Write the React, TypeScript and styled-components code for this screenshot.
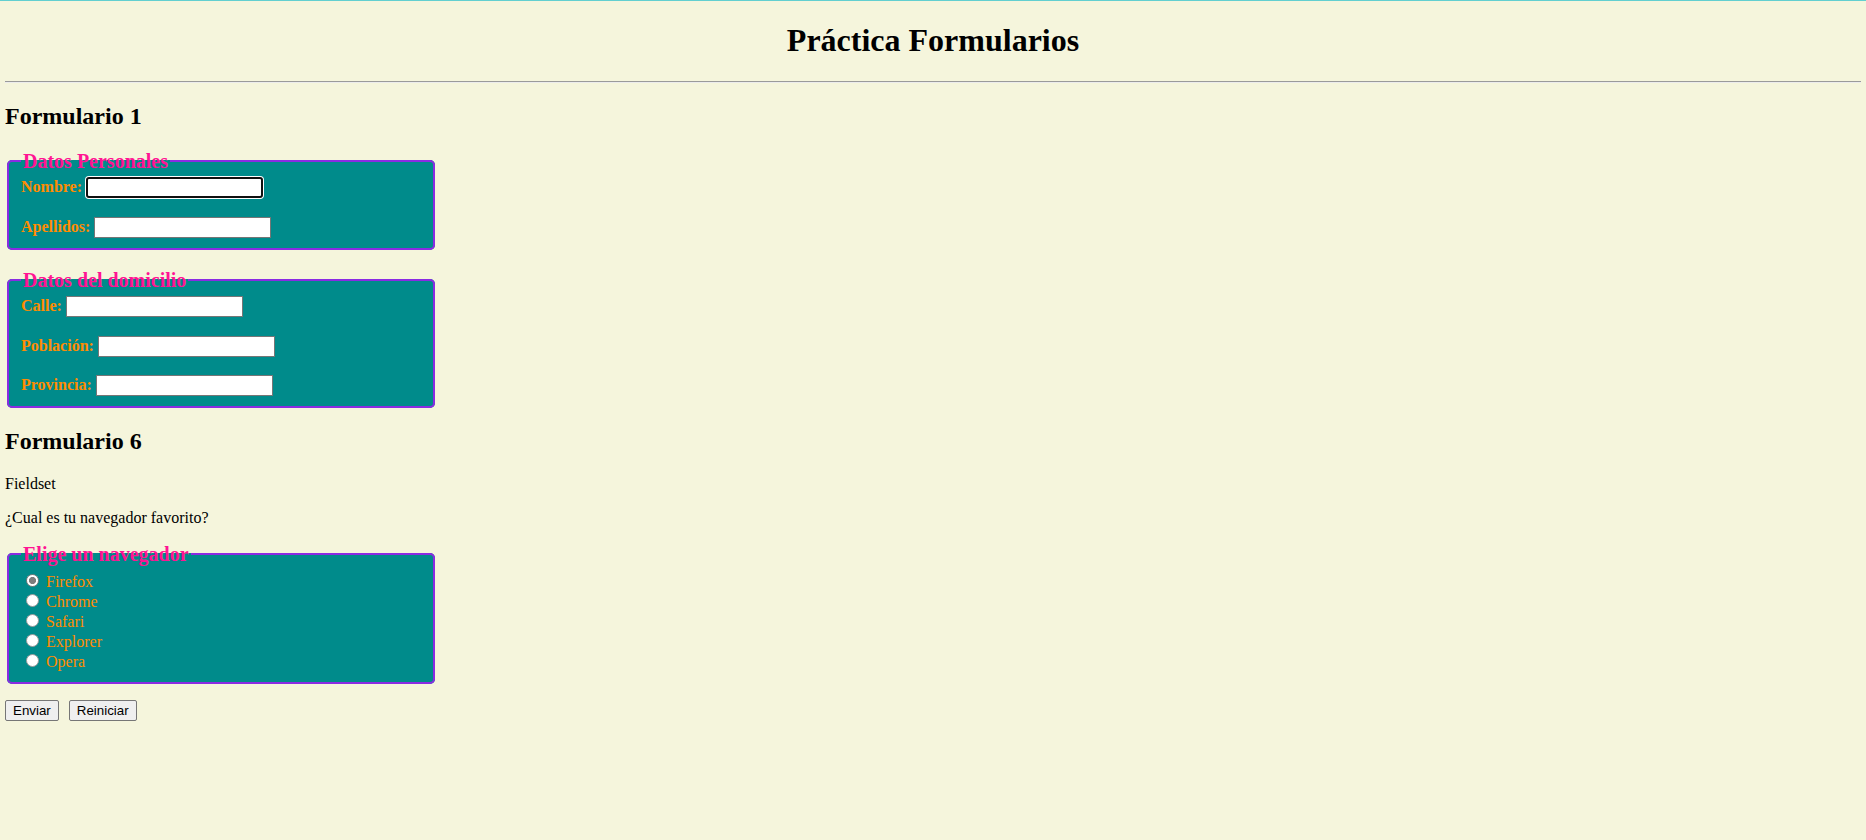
import React from "react";
import styled, { createGlobalStyle, css } from "styled-components";

const GlobalStyle = createGlobalStyle`
  html, body {
    margin: 0;
    padding: 0;
    background: #f5f5dc;
  }
  body {
    font-family: "Liberation Serif", "Times New Roman", serif;
    font-size: 16px;
    color: #000;
  }
`;

const Page = styled.div`
  border-top: 1px solid #62cfd0;
  padding: 0 5px 40px;
  min-height: 840px;
  box-sizing: border-box;
`;

const Title = styled.h1`
  text-align: center;
  font-size: 32px;
  font-weight: bold;
  line-height: normal;
  margin: 21.44px 0;
`;

const Rule = styled.hr`
  height: 0;
  margin: 8px 0;
  border: none;
  border-top: 1px solid #9a9a9a;
  border-bottom: 1px solid #ececec;
`;

const SectionTitle = styled.h2`
  font-size: 24px;
  font-weight: bold;
  line-height: normal;
  margin: 19.92px 0;
`;

const Text = styled.p`
  margin: 16px 0;
  line-height: normal;
`;

const Fieldset = styled.fieldset<{ $spaced?: boolean }>`
  width: 400px;
  margin: ${(p) => (p.$spaced ? "19px" : "0")} 2px 0;
  padding: 4.6px 12px 10px;
  background: #008b8b;
  border: 2px solid #8a2be2;
  border-radius: 5px;
  min-inline-size: min-content;
`;

const Legend = styled.legend`
  color: #ff1493;
  font-weight: bold;
  font-size: 20px;
  line-height: normal;
  padding: 0 2px;
`;

const FieldRows = styled.div`
  display: flex;
  flex-direction: column;
  gap: 18.4px;
`;

const FieldRow = styled.div`
  display: flex;
  align-items: baseline;
  gap: 4px;
`;

const FieldLabel = styled.label`
  color: #ff8c00;
  font-weight: bold;
  font-size: 16px;
  line-height: normal;
`;

const TextInput = styled.input<{ $focused?: boolean }>`
  box-sizing: border-box;
  width: 177px;
  height: 21px;
  padding: 1px 3px;
  margin: 0;
  font: 13.33px "Liberation Sans", Arial, sans-serif;
  color: #000;
  background: #fff;
  border: 1px solid #767676;
  border-radius: 0;
  &:focus {
    outline: none;
  }
  ${(p) =>
    p.$focused &&
    css`
      border: 2px solid #101010;
      border-radius: 3px;
      box-shadow: 0 0 0 1px #fff;
    `}
`;

const OptionList = styled.div`
  display: flex;
  flex-direction: column;
  padding-top: 1.5px;
`;

const OptionRow = styled.div`
  display: flex;
  align-items: center;
  height: 20px;
`;

const Radio = styled.input.attrs({ type: "radio" })`
  appearance: none;
  -webkit-appearance: none;
  box-sizing: border-box;
  width: 13px;
  height: 13px;
  margin: 2.5px 7px 0 5px;
  align-self: flex-start;
  flex: none;
  border-radius: 50%;
  border: 1px solid #9a9a9a;
  background: #fff;
  &:checked {
    border-color: #7d7d7d;
    background: radial-gradient(circle, #7d7d7d 0 3.2px, #fff 3.9px);
  }
  &:focus {
    outline: none;
  }
`;

const OptionLabel = styled.label`
  color: #ff8c00;
  font-size: 16px;
  line-height: normal;
`;

const ButtonBar = styled.div`
  display: flex;
  gap: 10px;
  margin: 16px 0;
`;

const Button = styled.button`
  box-sizing: border-box;
  height: 21px;
  padding: 1px 7px;
  margin: 0;
  font: 13.33px "Liberation Sans", Arial, sans-serif;
  color: #000;
  background: #efefef;
  border: 1px solid #767676;
  border-radius: 2px;
`;

type Field = { id: string; label: string; focused?: boolean };

const personal: Field[] = [
  { id: "nombre", label: "Nombre:", focused: true },
  { id: "apellidos", label: "Apellidos:" },
];

const address: Field[] = [
  { id: "calle", label: "Calle:" },
  { id: "poblacion", label: "Población:" },
  { id: "provincia", label: "Provincia:" },
];

const browsers = ["Firefox", "Chrome", "Safari", "Explorer", "Opera"];

function FieldGroup({ legend, fields, spaced }: { legend: string; fields: Field[]; spaced?: boolean }) {
  return (
    <Fieldset $spaced={spaced}>
      <Legend>{legend}</Legend>
      <FieldRows>
        {fields.map((f) => (
          <FieldRow key={f.id}>
            <FieldLabel htmlFor={f.id}>{f.label}</FieldLabel>
            <TextInput id={f.id} type="text" $focused={f.focused} autoFocus={f.focused} />
          </FieldRow>
        ))}
      </FieldRows>
    </Fieldset>
  );
}

export default function App() {
  return (
    <>
      <GlobalStyle />
      <Page>
        <Title>Práctica Formularios</Title>
        <Rule />
        <SectionTitle>Formulario 1</SectionTitle>
        <form onSubmit={(e) => e.preventDefault()}>
          <FieldGroup legend="Datos Personales" fields={personal} />
          <FieldGroup legend="Datos del domicilio" fields={address} spaced />
        </form>
        <SectionTitle>Formulario 6</SectionTitle>
        <Text>Fieldset</Text>
        <Text>¿Cual es tu navegador favorito?</Text>
        <form onSubmit={(e) => e.preventDefault()}>
          <Fieldset>
            <Legend>Elige un navegador</Legend>
            <OptionList>
              {browsers.map((b, i) => (
                <OptionRow key={b}>
                  <Radio id={`nav-${b}`} name="navegador" value={b} defaultChecked={i === 0} />
                  <OptionLabel htmlFor={`nav-${b}`}>{b}</OptionLabel>
                </OptionRow>
              ))}
            </OptionList>
          </Fieldset>
          <ButtonBar>
            <Button type="submit">Enviar</Button>
            <Button type="reset">Reiniciar</Button>
          </ButtonBar>
        </form>
      </Page>
    </>
  );
}
